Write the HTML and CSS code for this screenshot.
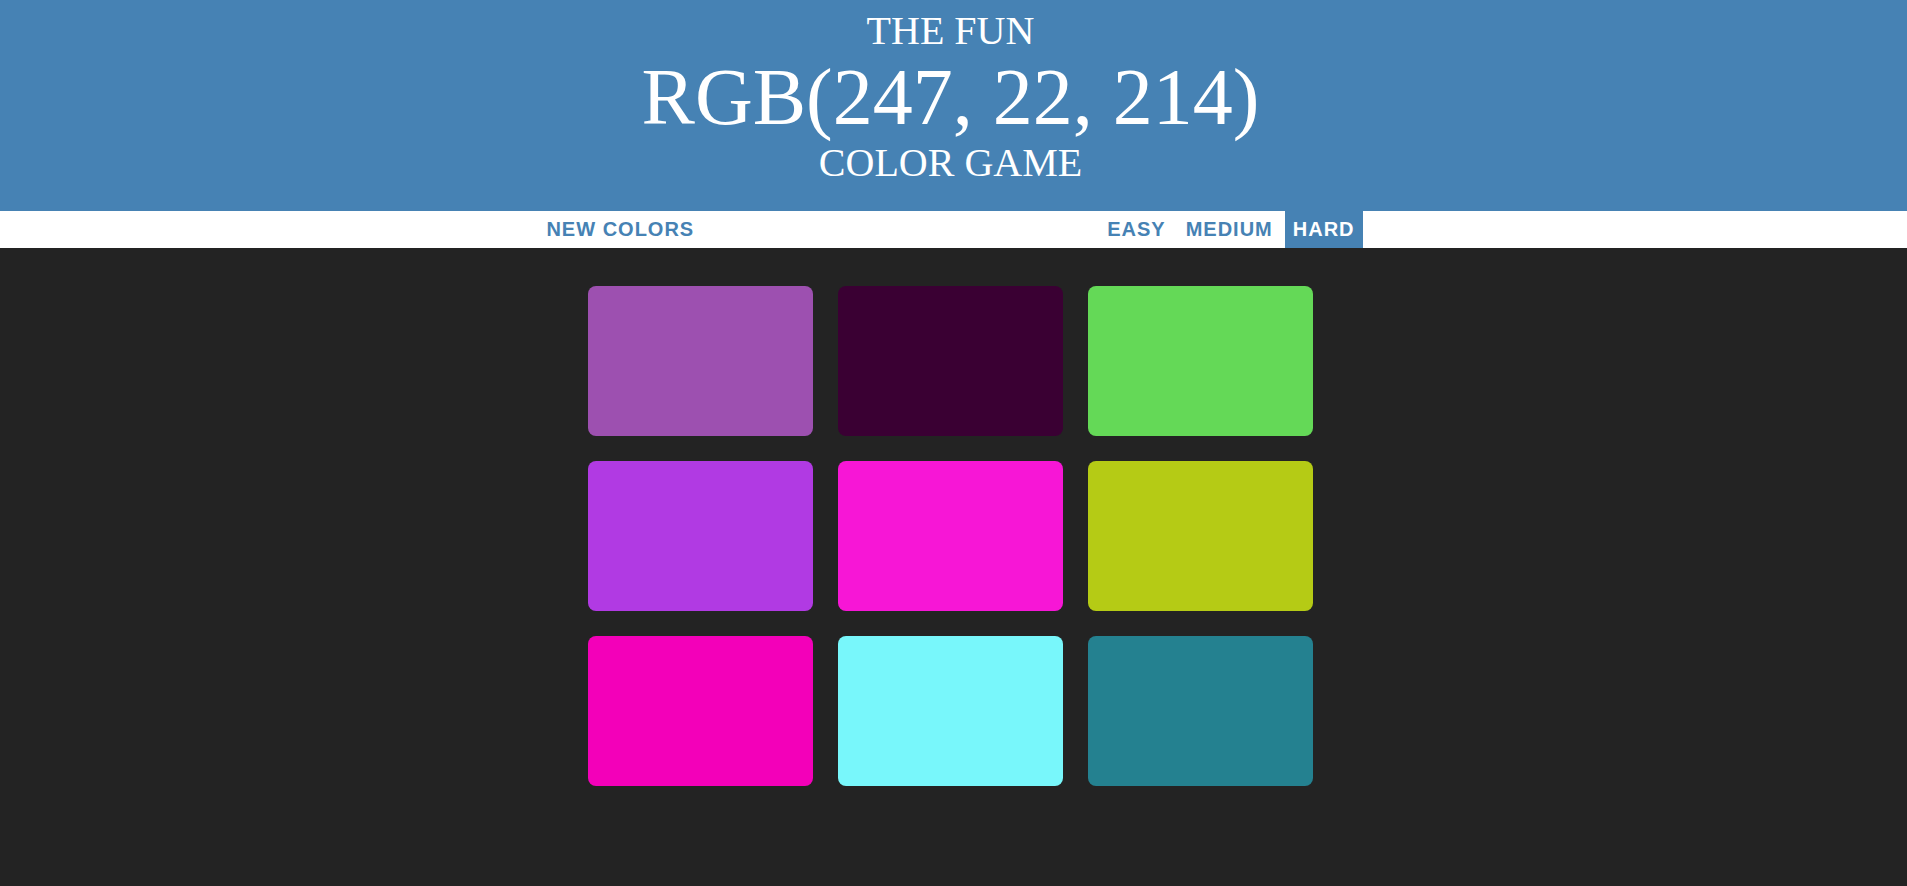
FILE: index.html
```html
<!DOCTYPE html>
<html lang="en">
<head>
<meta charset="utf-8">
<title>Color Game</title>
<link rel="stylesheet" href="styles.css">
</head>
<body>
<header class="top">
  <h1 class="title">
    <span class="title-line">THE FUN</span>
    <span class="title-rgb">RGB(247, 22, 214)</span>
    <span class="title-line">COLOR GAME</span>
  </h1>
</header>
<nav class="stripe">
  <button class="btn">NEW COLORS</button>
  <span class="message"></span>
  <button class="btn">EASY</button>
  <button class="btn">MEDIUM</button>
  <button class="btn selected">HARD</button>
</nav>
<main class="board">
  <div class="square" style="background: rgb(157, 80, 176)"></div>
  <div class="square" style="background: rgb(58, 0, 51)"></div>
  <div class="square" style="background: rgb(100, 217, 87)"></div>
  <div class="square" style="background: rgb(177, 58, 227)"></div>
  <div class="square" style="background: rgb(247, 22, 214)"></div>
  <div class="square" style="background: rgb(181, 203, 21)"></div>
  <div class="square" style="background: rgb(243, 0, 185)"></div>
  <div class="square" style="background: rgb(120, 247, 251)"></div>
  <div class="square" style="background: rgb(36, 129, 144)"></div>
</main>
</body>
</html>
```
FILE: styles.css
```css
html, body {
  margin: 0;
  padding: 0;
}
body {
  background: #232323;
  min-height: 100vh;
}
.top {
  background: #4682b4;
  color: #fff;
  text-align: center;
  padding: 9px 6px 26px 0;
}
.title {
  margin: 0;
  font-family: "Liberation Serif", "Times New Roman", serif;
  font-weight: normal;
  font-size: 40px;
  line-height: 1.1;
}
.title-line,
.title-rgb {
  display: block;
}
.title-rgb {
  font-size: 80px;
}
.stripe {
  background: #fff;
  height: 37px;
  display: flex;
  justify-content: center;
  gap: 4px;
  padding-right: 6px;
}
.btn {
  border: none;
  background: none;
  margin: 0;
  padding: 0 8px;
  height: 100%;
  font-family: "Liberation Sans", Arial, sans-serif;
  font-weight: 700;
  font-size: 20px;
  letter-spacing: 1px;
  color: #4682b4;
  cursor: pointer;
}
.btn.selected {
  background: #4682b4;
  color: #fff;
}
.message {
  width: 389px;
}
.board {
  display: grid;
  grid-template-columns: repeat(3, 225px);
  grid-auto-rows: 150px;
  gap: 25px;
  justify-content: center;
  padding: 38px 6px 0 0;
}
.square {
  border-radius: 8px;
}
```
